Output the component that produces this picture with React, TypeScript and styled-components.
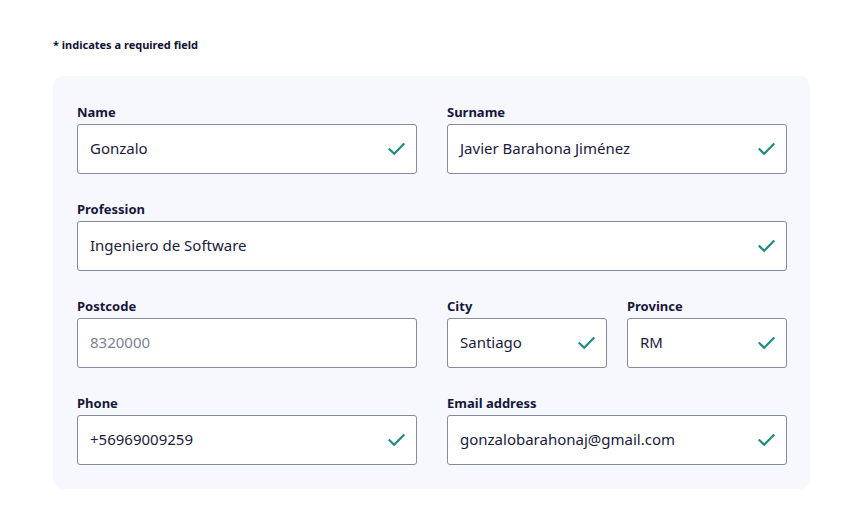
import React from "react";
import styled, { createGlobalStyle } from "styled-components";

const Global = createGlobalStyle`
  html, body { margin: 0; padding: 0; background: #ffffff; }
  body { font-family: "Noto Sans", "DejaVu Sans", sans-serif; color: #16163a; }
`;

const Page = styled.div`
  padding: 38px 37px 16px 53px;
  width: 757px;
`;

const Note = styled.p`
  margin: 0 0 24px 0;
  font-size: 11px;
  line-height: 14px;
  font-weight: 700;
  color: #111133;
`;

const Panel = styled.div`
  background: #f7f8fd;
  border-radius: 10px;
  padding: 27px 23px 24px 24px;
  display: flex;
  flex-direction: column;
  gap: 26px;
`;

const Row = styled.div<{ $cols: string; $gap: number }>`
  display: grid;
  grid-template-columns: ${(p) => p.$cols};
  column-gap: ${(p) => p.$gap}px;
`;

const Pair = styled.div`
  display: grid;
  grid-template-columns: 1fr 1fr;
  column-gap: 20px;
`;

const Field = styled.div`
  display: flex;
  flex-direction: column;
`;

const Label = styled.label`
  font-size: 13px;
  line-height: 18px;
  font-weight: 700;
  color: #16163a;
  margin-bottom: 3px;
`;

const Box = styled.div`
  height: 48px;
  border: 1px solid #858a9d;
  border-radius: 3px;
  background: #ffffff;
  display: flex;
  align-items: center;
  padding: 0 11px 0 12px;
`;

const Value = styled.span<{ $placeholder?: boolean }>`
  flex: 1;
  font-size: 15px;
  line-height: 20px;
  margin-top: -2px;
  color: ${(p) => (p.$placeholder ? "#7a8291" : "#1a1a3c")};
  white-space: nowrap;
`;

const Check = () => (
  <svg width="17" height="14" viewBox="0 0 17 14" fill="none">
    <path d="M1.5 7.2 L6.2 11.8 L15.5 2.2" stroke="#1d8c7e" strokeWidth="2.2" strokeLinecap="square" />
  </svg>
);

type FProps = { label: string; value: string; placeholder?: boolean; check?: boolean };

const InputField = ({ label, value, placeholder, check = true }: FProps) => (
  <Field>
    <Label>{label}</Label>
    <Box>
      <Value $placeholder={placeholder}>{value}</Value>
      {check && <Check />}
    </Box>
  </Field>
);

export default function App() {
  return (
    <>
      <Global />
      <Page>
        <Note>* indicates a required field</Note>
        <Panel>
          <Row $cols="1fr 1fr" $gap={30}>
            <InputField label="Name" value="Gonzalo" />
            <InputField label="Surname" value="Javier Barahona Jiménez" />
          </Row>
          <Row $cols="1fr" $gap={0}>
            <InputField label="Profession" value="Ingeniero de Software" />
          </Row>
          <Row $cols="1fr 1fr" $gap={30}>
            <InputField label="Postcode" value="8320000" placeholder check={false} />
            <Pair>
              <InputField label="City" value="Santiago" />
              <InputField label="Province" value="RM" />
            </Pair>
          </Row>
          <Row $cols="1fr 1fr" $gap={30}>
            <InputField label="Phone" value="+56969009259" />
            <InputField label="Email address" value="gonzalobarahonaj@gmail.com" />
          </Row>
        </Panel>
      </Page>
    </>
  );
}
